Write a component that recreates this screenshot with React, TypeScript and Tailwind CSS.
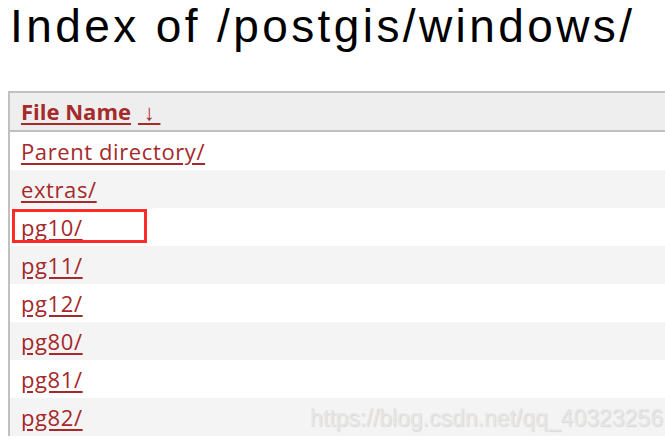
import React from "react";

const rows = ["Parent directory/", "extras/", "pg10/", "pg11/", "pg12/", "pg80/", "pg81/", "pg82/"];

export default function App() {
  return (
    <div className="relative w-[665px] h-[445px] overflow-hidden bg-white" style={{ fontFamily: '"Open Sans", "Noto Sans", sans-serif' }}>
      <h1 className="pl-[10px] h-[91px] text-[46px] leading-[52px] text-black tracking-[3.4px] whitespace-nowrap" style={{ fontFamily: '"Liberation Sans", sans-serif' }}>
        Index of /postgis/windows/
      </h1>
      <div className="ml-[8px] border-l-2 border-[#c0c0c0]">
        <div className="h-[41px] bg-[#eeeeee] border-t-2 border-b-2 border-[#c0c0c0] flex items-center pl-[11px]">
          <span className="text-[22px] font-bold text-[#a52a2a] underline underline-offset-[3px] decoration-[2px]">File Name</span>
          <span className="ml-[7px] text-[22px] font-bold text-[#a52a2a] underline underline-offset-[3px] decoration-[2px]">&nbsp;↓&nbsp;</span>
        </div>
        {rows.map((r, i) => (
          <div key={r} className={`relative h-[38px] flex items-center pl-[11px] ${i % 2 === 1 ? "bg-[#f4f4f4]" : "bg-white"}`}>
            <span className="text-[22px] tracking-[0.6px] text-[#a5282a] underline underline-offset-[3px]">{r}</span>
            {r === "pg10/" && (
              <div className="absolute left-[2px] top-[1px] w-[135px] h-[34px] border-[3px] border-[#ff2a2a]" />
            )}
          </div>
        ))}
      </div>
      <div className="absolute left-[310px] top-[407px] text-[23px] leading-[23px] whitespace-nowrap text-[#e6e6e6]" style={{ fontFamily: '"Liberation Sans", sans-serif', textShadow: "1px 1px 1px #d8d8d8" }}>
        https://blog.csdn.net/qq_40323256
      </div>
    </div>
  );
}
